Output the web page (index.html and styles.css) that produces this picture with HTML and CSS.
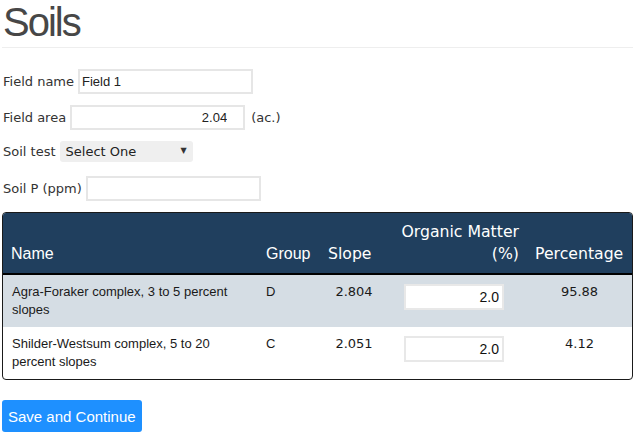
FILE: index.html
```html
<!DOCTYPE html>
<html>
<head>
<meta charset="utf-8">
<title>Soils</title>
<link rel="stylesheet" href="styles.css">
</head>
<body>
<div class="page">
  <h1 class="title">Soils</h1>
  <hr class="rule">
  <div class="form">
    <div class="row">
      <label class="lbl">Field name</label>
      <input class="txt" type="text" value="Field 1">
    </div>
    <div class="row">
      <label class="lbl">Field area</label>
      <input class="txt num" type="text" value="2.04">
      <span class="unit">(ac.)</span>
    </div>
    <div class="row row-select">
      <label class="lbl">Soil test</label>
      <div class="selectbox">
        <select class="sel"><option>Select One</option></select>
        <span class="arrow">&#9660;</span>
      </div>
    </div>
    <div class="row">
      <label class="lbl">Soil P (ppm)</label>
      <input class="txt" type="text" value="">
    </div>
  </div>
  <div class="tablewrap">
    <table class="soils">
      <colgroup>
        <col class="c-name"><col class="c-group"><col class="c-slope"><col class="c-om"><col class="c-pct">
      </colgroup>
      <thead>
        <tr>
          <th class="h-arial h-name">Name</th>
          <th class="h-arial">Group</th>
          <th class="h-verd">Slope</th>
          <th class="h-verd h-om">Organic Matter (%)</th>
          <th class="h-verd">Percentage</th>
        </tr>
      </thead>
      <tbody>
        <tr class="shade">
          <td class="d-name">Agra-Foraker complex, 3 to 5 percent slopes</td>
          <td>D</td>
          <td class="d-num">2.804</td>
          <td class="d-om"><input class="cellin" type="text" value="2.0"></td>
          <td class="d-num">95.88</td>
        </tr>
        <tr>
          <td class="d-name">Shilder-Westsum complex, 5 to 20 percent slopes</td>
          <td>C</td>
          <td class="d-num">2.051</td>
          <td class="d-om"><input class="cellin" type="text" value="2.0"></td>
          <td class="d-num">4.12</td>
        </tr>
      </tbody>
    </table>
  </div>
  <button class="save" type="button">Save and Continue</button>
</div>
</body>
</html>
```
FILE: styles.css
```css
html, body {
  margin: 0;
  padding: 0;
  background: #fff;
}
.page {
  padding: 0 4px 0 2px;
  font-family: "DejaVu Sans", Verdana, sans-serif;
  font-size: 13px;
  color: #333;
}
.title {
  margin: 0 0 2px 1px;
  font-family: "Liberation Sans", Arial, sans-serif;
  font-weight: normal;
  font-size: 40px;
  line-height: 45px;
  letter-spacing: -2px;
  color: #474747;
}
.rule {
  margin: 0;
  border: 0;
  border-top: 1px solid #eeeeee;
  height: 0;
}
.form {
  display: flex;
  flex-direction: column;
  padding-top: 21px;
  padding-left: 1px;
  gap: 11px;
}
.row {
  display: flex;
  align-items: center;
  height: 25px;
}
.row-select {
  height: 21px;
  margin-bottom: 3px;
}
.lbl {
  margin-right: 4px;
  white-space: nowrap;
}
.txt {
  box-sizing: border-box;
  width: 175px;
  height: 25px;
  border: 2px solid #e6e6e6;
  padding: 0 2px;
  margin: 0;
  font-family: "Liberation Sans", Arial, sans-serif;
  font-size: 13px;
  color: #222;
  outline: none;
}
.num {
  text-align: right;
  padding-right: 16px;
}
.unit {
  margin-left: 6px;
}
.selectbox {
  position: relative;
  width: 133px;
  height: 21px;
  background: #efefef;
  border-radius: 3px;
}
.sel {
  appearance: none;
  -webkit-appearance: none;
  border: 0;
  background: transparent;
  width: 100%;
  height: 21px;
  margin: 0;
  padding: 0 0 0 6px;
  font-family: "DejaVu Sans", Verdana, sans-serif;
  font-size: 13px;
  color: #222;
  outline: none;
}
.arrow {
  position: absolute;
  right: 6px;
  top: 5px;
  font-size: 8px;
  line-height: 10px;
  color: #333;
  pointer-events: none;
}
.tablewrap {
  margin-top: 11px;
  border: 1px solid #1a1a1a;
  border-radius: 4px;
  overflow: hidden;
}
.soils {
  width: 100%;
  border-collapse: collapse;
  table-layout: fixed;
}
.c-name { width: 255px; }
.c-group { width: 62px; }
.c-slope { width: 68px; }
.c-om { width: 139px; }
.c-pct { width: 105px; }
.soils thead tr {
  background: #203f5e;
  border-bottom: 2px solid #000;
}
.soils th {
  color: #fff;
  font-weight: normal;
  text-align: left;
  vertical-align: bottom;
  padding: 8px 8px;
  line-height: 22px;
}
.h-arial {
  font-family: "Liberation Sans", Arial, sans-serif;
  font-size: 16px;
}
.h-verd {
  font-family: "DejaVu Sans", Verdana, sans-serif;
  font-size: 15.7px;
}
.h-name {
  padding-left: 9px;
}
.h-om {
  text-align: right !important;
}
.soils td {
  vertical-align: top;
  padding: 8px;
  line-height: 18px;
  font-family: "Liberation Sans", Arial, sans-serif;
  font-size: 13px;
  color: #1a1a1a;
}
.soils tr.shade {
  background: #d5dde4;
}
.soils td.d-name {
  padding-left: 9px;
}
.soils td.d-num {
  text-align: center;
  font-family: "DejaVu Sans", Verdana, sans-serif;
  font-size: 13px;
}
.soils td.d-om {
  padding-left: 16px;
}
.cellin {
  display: block;
  box-sizing: border-box;
  width: 100px;
  height: 26px;
  margin: 1px 0 0 0;
  border: 2px solid #e8e8e8;
  padding: 0 3px 0 2px;
  text-align: right;
  font-family: "Liberation Sans", Arial, sans-serif;
  font-size: 14px;
  color: #111;
  background: #fff;
  outline: none;
}
.save {
  margin-top: 20px;
  height: 32px;
  padding: 0 6px;
  border: 0;
  border-radius: 3px;
  background: #1e90ff;
  color: #fff;
  font-family: "Liberation Sans", Arial, sans-serif;
  font-size: 15px;
  cursor: pointer;
}
```
